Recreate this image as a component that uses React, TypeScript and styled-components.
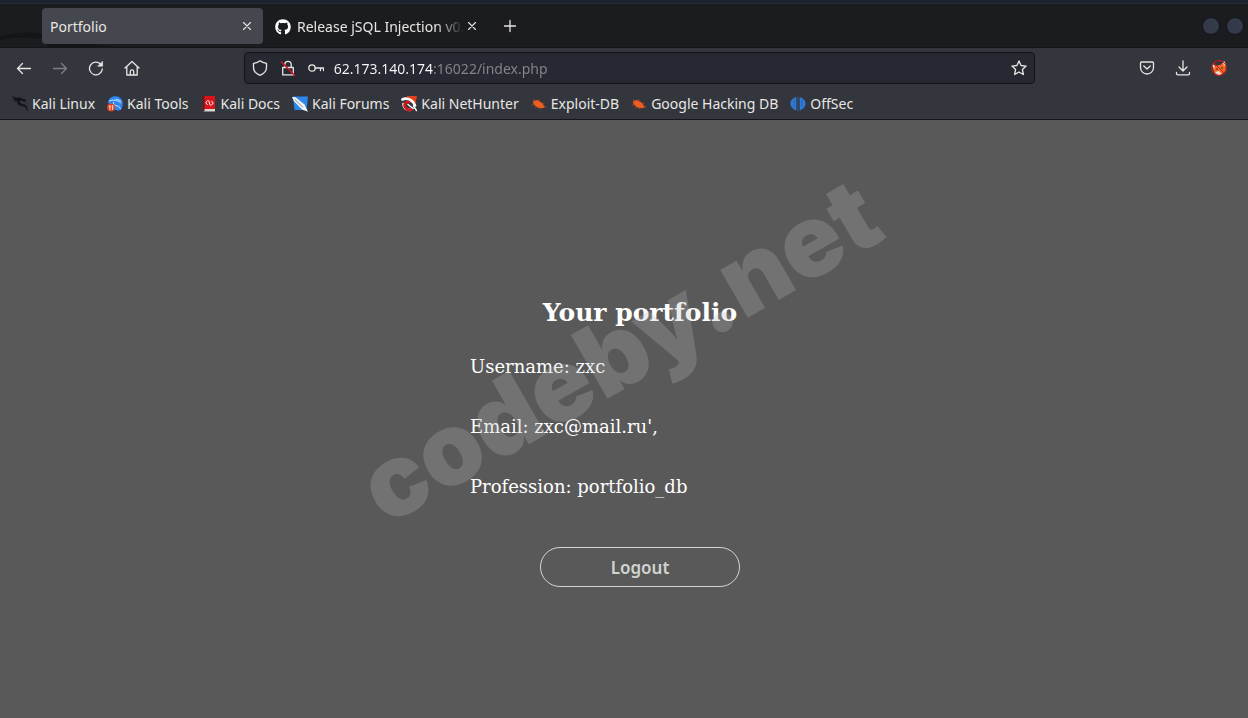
import React from "react";
import styled, { createGlobalStyle } from "styled-components";
import { FaGithub } from "react-icons/fa";

const GlobalStyle = createGlobalStyle`
  *, *::before, *::after { box-sizing: border-box; }
  html, body, #root { height: 100%; }
  body { margin: 0; background: #595959; overflow: hidden; }
  button, input { font: inherit; }
`;

const ui = `"Noto Sans", "Open Sans", sans-serif`;

const Window = styled.div`
  display: flex;
  flex-direction: column;
  min-height: 100%;
  font-family: ${ui};
  font-size: 14px;
  color: #e8e6e3;
`;

const DesktopEdge = styled.div`
  height: 4px;
  background: #1c222d;
  border-bottom: 1px solid #252c38;
`;

const TabBar = styled.header`
  position: relative;
  display: flex;
  align-items: center;
  gap: 4px;
  height: 44px;
  padding: 0 4px 0 42px;
  background: #1b1c20;
  border-bottom: 1px solid #141519;
`;

const Shade = styled.svg`
  position: absolute;
  left: 0;
  bottom: 0;
`;

const Tab = styled.div<{ $active?: boolean }>`
  position: relative;
  display: flex;
  align-items: center;
  width: 221px;
  height: 36px;
  padding: 0 8px;
  border-radius: 4px;
  background: ${(p) => (p.$active ? "#44474d" : "transparent")};
`;

const TabTitle = styled.button<{ $fade?: boolean }>`
  display: flex;
  align-items: center;
  gap: 6px;
  flex: 1;
  min-width: 0;
  padding: 2px 0 0;
  border: 0;
  background: none;
  color: inherit;
  white-space: nowrap;
  line-height: 20px;
  svg { flex: none; }
  span {
    ${(p) => p.$fade && "mask-image: linear-gradient(to left, transparent 0, #000 28px);"}
  }
`;

const IconButton = styled.button<{ $size?: number; $dim?: boolean }>`
  display: flex;
  align-items: center;
  justify-content: center;
  flex: none;
  width: ${(p) => p.$size ?? 36}px;
  height: ${(p) => p.$size ?? 36}px;
  padding: 0;
  border: 0;
  background: none;
  color: ${(p) => (p.$dim ? "#7d7f83" : "#e8e6e3")};
`;

const WindowControls = styled.div`
  display: flex;
  gap: 6px;
  margin-left: auto;
`;

const WindowDot = styled.button`
  width: 18px;
  height: 18px;
  padding: 0;
  border: 1px solid #121318;
  border-radius: 50%;
  background: #343a4a;
`;

const Toolbar = styled.nav`
  display: flex;
  align-items: center;
  height: 40px;
  padding: 0 11px 0 6px;
  background: #33363d;
`;

const Spacer = styled.div`
  flex: 1;
`;

const AddressBar = styled.div`
  display: flex;
  align-items: center;
  flex: 8.4;
  height: 32px;
  padding: 0 1px;
  border: 1px solid #131418;
  border-radius: 4px;
  background: #272932;
`;

const Address = styled.input`
  flex: 1;
  min-width: 0;
  padding: 2px 0 0;
  border: 0;
  margin-left: 4px;
  outline: none;
  line-height: 20px;
  color: #fbfbfe;
  background: linear-gradient(to right, #fbfbfe 99px, #86878d 99px);
  background-clip: text;
  -webkit-background-clip: text;
  -webkit-text-fill-color: transparent;
`;

const Bookmarks = styled.nav`
  display: flex;
  align-items: center;
  gap: 12px;
  height: 32px;
  padding: 0 12px;
  background: #33363d;
  border-bottom: 1px solid #16171b;
`;

const Bookmark = styled.a`
  display: flex;
  align-items: center;
  gap: 4px;
  color: inherit;
  text-decoration: none;
  white-space: nowrap;
  line-height: 20px;
  svg { flex: none; }
`;

const Page = styled.main`
  position: relative;
  flex: 1;
  display: flex;
  justify-content: center;
  padding: 177px 0 0 32px;
  background: #595959;
  overflow: hidden;
`;

const Portfolio = styled.section`
  display: flex;
  flex-direction: column;
  align-items: center;
  width: 340px;
  color: #fff;
  font-family: "DejaVu Serif", serif;
`;

const Title = styled.h1`
  margin: 0 0 8px;
  font-size: 25px;
  line-height: 32px;
  font-weight: 700;
`;

const Field = styled.p`
  align-self: stretch;
  margin: 0;
  font-size: 18px;
  line-height: 60px;
`;

const Logout = styled.button`
  width: 200px;
  height: 40px;
  margin-top: 30px;
  padding: 0;
  border: 1px solid #d3d7cf;
  border-radius: 20px;
  background: none;
  color: #d0d4cf;
  font-family: ${ui};
  font-size: 17px;
  font-weight: 600;
`;

const Watermark = styled.div`
  position: absolute;
  left: calc(50% - 5px);
  top: 230px;
  font-family: Inter, "Liberation Sans", sans-serif;
  font-size: 101px;
  font-weight: 900;
  line-height: 1;
  white-space: nowrap;
  color: #b9b9b9;
  opacity: 0.26;
  transform: translate(-50%, -50%) rotate(-30deg);
  pointer-events: none;
`;

const Icon = ({ children, size = 16 }: { children: React.ReactNode; size?: number }) => (
  <svg
    width={size}
    height={size}
    viewBox="0 0 16 16"
    fill="none"
    stroke="currentColor"
    strokeWidth="1.3"
    strokeLinecap="round"
    strokeLinejoin="round"
    aria-hidden="true"
  >
    {children}
  </svg>
);

const CloseIcon = () => (
  <Icon><path d="M4.5 4.5l7 7M11.5 4.5l-7 7" strokeWidth="1.1" /></Icon>
);

const DragonIcon = () => (
  <Icon>
    <path
      d="M.3.8l4 1.200L8.500 1.800l2 1.400 2.800.6 1 1.700-2.500-.4-2-.7C7.600 4 7 5.500 8 7c1 1.300 3 1.200 4.600 1.800 1.800.8 2.600 2.600 2.900 6-1-2.600-2-4-3.700-4.600C9.700 9.600 7.400 9.700 6.200 8 5.500 7 5.500 5.600 6 4.400L2.500 5.500 4.600 3.700.8 3.500 3.400 2.800z"
      fill="#121317"
      stroke="#121317"
      strokeWidth=".5"
    />
  </Icon>
);

const ToolsIcon = () => (
  <Icon>
    <path d="M1 6C2 2 5 .3 8.500.3c4.300 0 7.300 3 7.300 7.200 0 3.500-1.500 6-4 7.200L4 13z" fill="#2d86ee" stroke="none" />
    <path d="M2.500 4.800c4-1.200 8-.8 11 2M6.500 6.500c-.5 3 2 3 4 3.500s2.500 1.500 3 3M9 3.200c2 .2 4 1.200 5 2.300" stroke="#dcebfd" strokeWidth=".9" />
    <circle cx="4" cy="11.500" r="4" fill="#e2401c" stroke="none" />
    <path d="M2.200 10.200l.8-.6v4M4.900 10.200l.8-.6v4" stroke="#fff" strokeWidth=".9" />
  </Icon>
);

const DocsIcon = () => (
  <Icon>
    <path d="M2 0h12v13H2z" fill="#d9141b" stroke="none" />
    <path d="M2 13h12v2.500H2z" fill="#d7d3cf" stroke="none" />
    <path d="M2 0h1.500v15.500H2z" fill="#7c1015" stroke="none" />
    <path d="M6.300 4.800L4.800 6.800l1.500 1.800M10.700 5.200l1.500 1.800-1.500 2M7.800 4.800l1.400 4.400" stroke="#fff" strokeWidth="1" />
  </Icon>
);

const ForumsIcon = () => (
  <Icon>
    <path d="M1 .5h15l-1.500 13.500H2.500z" fill="#2d86ee" stroke="none" />
    <path d="M0 1l3.500.3 9 7.200L16 15.800l-6-2.300L1.800 5z" fill="#f4f6f8" stroke="none" />
    <path d="M3 3.500l7.500 7.500" stroke="#5b6470" strokeWidth=".8" />
  </Icon>
);

const NetHunterIcon = () => (
  <Icon>
    <path d="M5.500 0H16l-2 10z" fill="#e2401c" stroke="none" />
    <path d="M1.500 3.500C5 1.500 11 3 14 9.500M2.500 8c0 4 3 6 6.500 6" stroke="#fff" strokeWidth="2.600" />
    <path d="M8 6C4.500 5.500 2.500 8.500 4 11s4 3.500 6 2.500" stroke="#d9141b" strokeWidth="2.600" />
    <path d="M7 8.500l5 4M12.500 10l3 4.500" stroke="#fff" strokeWidth="1.500" />
  </Icon>
);

const BugIcon = () => (
  <Icon>
    <path d="M2 5.500c1.800-1.800 5-1.500 7 0 2 1 3.800 3 4.800 6-3.300 1.300-6.800.8-9.300-1.200C3 9 2 7.500 2 5.500z" fill="#f05e23" stroke="none" />
    <path d="M4 6L2.500 3.500M8 6l-.5-2.500M11 8l2-1M4 8.500L1 9M6 10l-1.500 2M9 11l-.5 2M12 10l3 .8" stroke="#b54a22" strokeWidth=".8" />
  </Icon>
);

const OffSecIcon = () => (
  <Icon>
    <path d="M6.300 1v13.500C3 13 .5 10.800.5 7.500S3 2 6.300 1zM9.700 1v13.500c3.300-1.500 5.800-3.700 5.800-7S13 2 9.700 1z" fill="#2f7bd8" stroke="none" />
    <path d="M8 1v14" stroke="#2a5f9f" strokeWidth=".9" />
    <path d="M4 4v7M12 4v7" stroke="#23518c" strokeWidth=".5" />
  </Icon>
);

const FoxIcon = () => (
  <Icon>
    <path d="M1 4l3.500 2L10 4.500 13 1l2 4-.5 6-5 4-5-.5-2-4z" fill="#ee6a25" stroke="none" />
    <path d="M1 4l3 1.500L3 9zM12 3l1.200-2L15 5l-2 1zM4 12l4-1 3 3-4 1.200z" fill="#ead8cc" stroke="none" />
    <circle cx="6" cy="9" r=".8" fill="#382018" stroke="none" />
    <circle cx="11" cy="8" r=".8" fill="#382018" stroke="none" />
    <circle cx="8" cy="8" r="7.400" stroke="#df141e" strokeWidth="1" />
    <path d="M3 3l10 10" stroke="#df141e" strokeWidth="1" />
  </Icon>
);

const bookmarks = [
  { name: "Kali Linux", icon: <DragonIcon /> },
  { name: "Kali Tools", icon: <ToolsIcon /> },
  { name: "Kali Docs", icon: <DocsIcon /> },
  { name: "Kali Forums", icon: <ForumsIcon /> },
  { name: "Kali NetHunter", icon: <NetHunterIcon /> },
  { name: "Exploit-DB", icon: <BugIcon /> },
  { name: "Google Hacking DB", icon: <BugIcon /> },
  { name: "OffSec", icon: <OffSecIcon /> },
];

const fields = ["Username: zxc", "Email: zxc@mail.ru',", "Profession: portfolio_db"];

export default function App() {
  return (
    <Window>
      <GlobalStyle />
      <DesktopEdge />
      <TabBar>
        <Shade width="130" height="16" viewBox="0 0 130 16" fill="none" aria-hidden="true">
          <path d="M0 6C14 1 28 1 44 3v5C28 6 14 6 0 9zM44 12c24-2 46 0 70 4H50z" fill="#141519" />
        </Shade>
        <Tab $active>
          <TabTitle><span>Portfolio</span></TabTitle>
          <IconButton $size={16} aria-label="Close Portfolio"><CloseIcon /></IconButton>
        </Tab>
        <Tab>
          <TabTitle $fade>
            <FaGithub size={16} color="#fff" />
            <span>Release jSQL Injection v0.</span>
          </TabTitle>
          <IconButton $size={16} aria-label="Close Release"><CloseIcon /></IconButton>
        </Tab>
        <IconButton aria-label="New tab">
          <Icon><path d="M8 2.500v11M2.500 8h11" /></Icon>
        </IconButton>
        <WindowControls>
          <WindowDot aria-label="Minimize" />
          <WindowDot aria-label="Maximize" />
        </WindowControls>
      </TabBar>
      <Toolbar>
        <IconButton aria-label="Back">
          <Icon><path d="M14.500 8.500h-13M6.500 3.500l-5 5 5 5" /></Icon>
        </IconButton>
        <IconButton $dim aria-label="Forward">
          <Icon><path d="M1.500 8.500h13M9.500 3.500l5 5-5 5" /></Icon>
        </IconButton>
        <IconButton aria-label="Reload">
          <Icon>
            <path d="M14.300 9A6.400 6.400 0 1 1 12.500 4" />
            <path d="M14.600 1.500v4.700H9.900z" fill="currentColor" strokeWidth=".6" />
          </Icon>
        </IconButton>
        <IconButton aria-label="Home">
          <Icon>
            <path d="M1 8l7-6.500L15 8M2.800 7v8h10.400V7M6.300 15v-3.500a1.700 1.700 0 0 1 3.400 0V15" />
          </Icon>
        </IconButton>
        <Spacer />
        <AddressBar>
          <IconButton $size={28} aria-label="Tracking protection">
            <Icon><path d="M8 .8c2 1.600 4 2.200 6.500 2.600v3.800c0 3.700-2.500 6.500-6.500 8.100C4 13.700 1.500 10.900 1.500 7.200V3.400C4 3 6 2.400 8 .8z" /></Icon>
          </IconButton>
          <IconButton $size={28} aria-label="Connection not secure">
            <Icon>
              <path d="M2.700 7.500h10.600v7.400H2.700zM4.800 7.500v-3a3.200 3.200 0 0 1 6.400 0v3" />
              <path d="M1.500 2l13 13.300" stroke="#d8141e" strokeWidth="1.500" />
            </Icon>
          </IconButton>
          <IconButton $size={28} aria-label="Saved login">
            <Icon>
              <circle cx="4" cy="8" r="3.200" />
              <path d="M7.200 8h8.300v2.500M12.500 8v2.500" />
            </Icon>
          </IconButton>
          <Address aria-label="Address" defaultValue="62.173.140.174:16022/index.php" />
          <IconButton $size={28} aria-label="Bookmark this page">
            <Icon><path d="M8 .9l2.100 4.600 5 .6-3.700 3.400 1 5L8 12l-4.400 2.500 1-5L.9 6.100l5-.6z" /></Icon>
          </IconButton>
        </AddressBar>
        <Spacer />
        <IconButton aria-label="Save to Pocket">
          <Icon>
            <path d="M2.500 2h11c.6 0 1 .4 1 1v4.500a6.500 6.500 0 0 1-13 0V3c0-.6.4-1 1-1zM4.800 6L8 9l3.200-3" />
          </Icon>
        </IconButton>
        <IconButton aria-label="Downloads">
          <Icon><path d="M8 .8v10M4 7l4 4 4-4M1.500 12.500v1c0 .8.600 1.300 1.300 1.300h10.400c.7 0 1.300-.5 1.300-1.300v-1" /></Icon>
        </IconButton>
        <IconButton aria-label="Proxy extension"><FoxIcon /></IconButton>
      </Toolbar>
      <Bookmarks>
        {bookmarks.map((b) => (
          <Bookmark key={b.name} href="#">
            {b.icon}
            <span>{b.name}</span>
          </Bookmark>
        ))}
      </Bookmarks>
      <Page>
        <Portfolio>
          <Title>Your portfolio</Title>
          {fields.map((f) => (
            <Field key={f}>{f}</Field>
          ))}
          <Logout>Logout</Logout>
        </Portfolio>
        <Watermark>codeby.net</Watermark>
      </Page>
    </Window>
  );
}
